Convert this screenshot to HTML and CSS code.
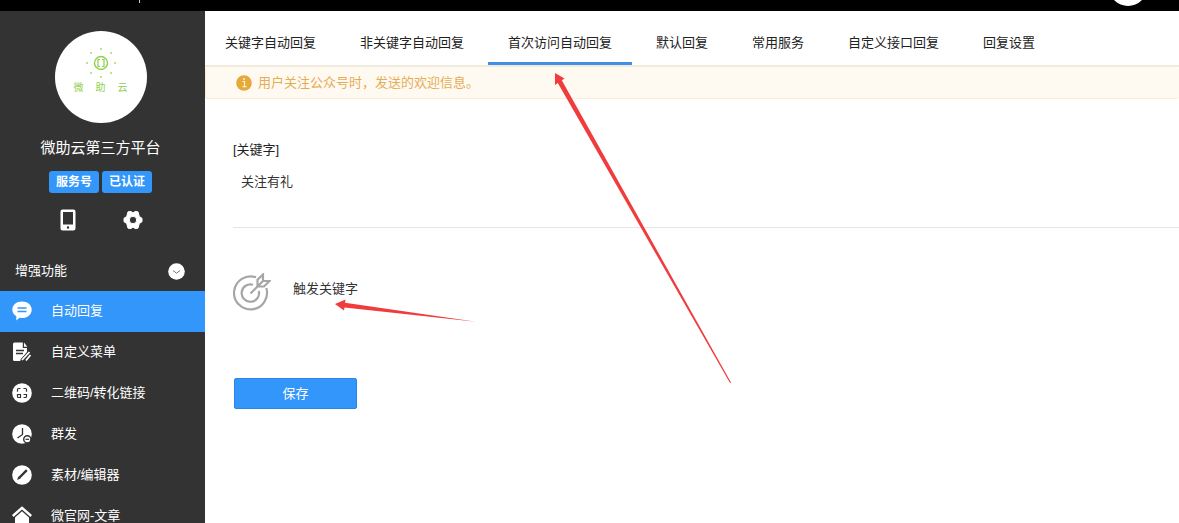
FILE: index.html
```html
<!DOCTYPE html>
<html lang="zh-CN">
<head>
  <meta charset="UTF-8">
  <title>自动回复</title>
  <link rel="stylesheet" href="styles.css">
</head>
<body>
  <header class="topbar">
    <span class="divider"></span>
    <svg class="user" width="28" height="11" viewBox="0 0 28 11"><circle cx="14" cy="-13" r="19" fill="#fff"/></svg>
  </header>

  <div class="layout">
    <aside class="sidebar">
      <div class="account">
        <div class="avatar">
          <svg width="32" height="32" viewBox="0 0 32 32" fill="none" stroke="#8fd14f">
            <circle cx="16" cy="16" r="6.500" stroke-width="1.400"/>
            <path d="M15 12.500h-2v7h2M17 12.500h2v7h-2" stroke-width="1.200"/>
            <g fill="#a5dc70" stroke="none">
              <circle cx="16" cy="2" r="1"/><circle cx="26" cy="6" r="1"/><circle cx="30" cy="16" r="1"/><circle cx="26" cy="26" r="1"/>
              <circle cx="16" cy="30" r="1"/><circle cx="6" cy="26" r="1"/><circle cx="2" cy="16" r="1"/><circle cx="6" cy="6" r="1"/>
            </g>
          </svg>
          <div class="brand"><span>微</span><span>助</span><span>云</span></div>
        </div>
        <div class="name">微助云第三方平台</div>
        <div class="badges"><span class="badge">服务号</span><span class="badge">已认证</span></div>
        <div class="tools">
          <a href="#" aria-label="手机预览">
            <svg width="20" height="22" viewBox="0 0 20 22"><path fill="#fff" fill-rule="evenodd" d="M4.500 .5h11a2 2 0 0 1 2 2v17a2 2 0 0 1-2 2h-11a2 2 0 0 1-2-2v-17a2 2 0 0 1 2-2zM5 3v12.500h10V3zM10 17.300a1.200 1.200 0 1 0 0 2.400 1.200 1.200 0 0 0 0-2.400z"/></svg>
          </a>
          <a href="#" aria-label="设置">
            <svg width="20" height="22" viewBox="0 0 20 22">
              <path fill="#fff" fill-rule="evenodd" stroke="#fff" stroke-linejoin="round" d="M5 2.800L8 2.500 10 4 12 2.500 15 2.800 16.300 7.500 19 9.300V12.700L16.300 14.500 15 19.200 12 19.500 10 18 8 19.500 5 19.200 3.700 14.500 1 12.700V9.300L3.700 7.500zM10 7.300a3.700 3.700 0 1 0 0 7.400 3.700 3.700 0 0 0 0-7.400z"/>
            </svg>
          </a>
        </div>
      </div>

      <button class="group" type="button">
        增强功能
        <svg width="17" height="17" viewBox="0 0 17 17"><circle cx="8.500" cy="8.500" r="8.300" fill="#fff"/><path d="M5 7.500l3.500 2.700L12 7.500" fill="none" stroke="#777"/></svg>
      </button>

      <nav class="menu">
        <a class="item active" href="#">
          <svg width="20" height="20" viewBox="0 0 20 20"><path fill="#fff" d="M10 .5c5.500 0 9.700 3.500 9.700 8.200S15.500 17 10 17c-1 0-1.700-.1-2.500-.3L4.200 19.500l.2-4.200C2 13.800.300 11.500.300 8.700.300 4 4.500.5 10 .5z"/><path d="M5.500 7h9M5.500 10.500h9" stroke="#3296fa" stroke-width="1.500"/></svg>
          自动回复
        </a>
        <a class="item" href="#">
          <svg width="20" height="20" viewBox="0 0 20 20"><path fill="#fff" d="M2.500.5h8.300V6H15v4l-7 9H2.500a1.500 1.500 0 0 1-1.500-1.500V2A1.500 1.500 0 0 1 2.500.5zM12 .5L15.300 4.700H12z"/><path d="M4 8.500h8M4 11.500h7" stroke="#333" stroke-width="1.400"/><path d="M18 10.500L10 19" stroke="#333" stroke-width="4.500"/><path d="M17.500 10L10 18M18.500 13L14 18.500" stroke="#fff" stroke-width="1.800"/></svg>
          自定义菜单
        </a>
        <a class="item" href="#">
          <svg width="20" height="20" viewBox="0 0 20 20"><circle cx="10" cy="10" r="9.800" fill="#fff"/><path d="M8.500 5.500H6.500a1 1 0 0 0-1 1v2.300M11.500 5.500h2a1 1 0 0 1 1 1v2.300M5.500 11.500h3v3h-2a1 1 0 0 1-1-1zM11.500 11.500h3v2a1 1 0 0 1-1 1h-2" fill="none" stroke="#333" stroke-width="1.200"/></svg>
          二维码/转化链接
        </a>
        <a class="item" href="#">
          <svg width="20" height="20" viewBox="0 0 20 20"><circle cx="10" cy="10" r="9.800" fill="#fff"/><path d="M10.500 4v6.500L5.500 14" fill="none" stroke="#333" stroke-width="1.300"/><circle cx="15.300" cy="15.300" r="3.600" fill="#fff" stroke="#333" stroke-width="1.400"/><path d="M13.500 15.300h3.600" stroke="#333" stroke-width="1.200"/></svg>
          群发
        </a>
        <a class="item" href="#">
          <svg width="20" height="20" viewBox="0 0 20 20"><circle cx="10" cy="10" r="9.800" fill="#fff"/><path d="M14.800 5.200L7 13" stroke="#333" stroke-width="2.400"/><path d="M6.500 11.500l2 2L5 15z" fill="#333"/></svg>
          素材/编辑器
        </a>
        <a class="item" href="#">
          <svg width="20" height="20" viewBox="0 0 20 20"><path d="M.8 10L10 1.800 19.200 10" fill="none" stroke="#fff" stroke-width="2.400"/><path d="M3 11.500L10 5.300l7 6.200V19H3z" fill="#fff"/></svg>
          微官网-文章
        </a>
      </nav>
    </aside>

    <main class="main">
      <nav class="tabs">
        <a class="tab" href="#">关键字自动回复</a>
        <a class="tab" href="#">非关键字自动回复</a>
        <a class="tab current" href="#">首次访问自动回复</a>
        <a class="tab" href="#">默认回复</a>
        <a class="tab" href="#">常用服务</a>
        <a class="tab" href="#">自定义接口回复</a>
        <a class="tab" href="#">回复设置</a>
      </nav>
      <div class="notice">
        <svg width="16" height="16" viewBox="0 0 16 16"><circle cx="8" cy="8" r="7.800" fill="#e6a93c"/><path d="M6.500 6.500H8.500V11.500M6.500 11.700h4" fill="none" stroke="#fff3d6" stroke-width="1.200"/><circle cx="8" cy="4" r="1" fill="#fff3d6"/></svg>
        用户关注公众号时，发送的欢迎信息。
      </div>

      <form class="form">
        <div class="field">
          <label for="keyword">[关键字]</label>
          <input id="keyword" type="text" value="关注有礼">
        </div>
        <div class="trigger">
          <svg width="38" height="38" viewBox="0 0 38 38" fill="none" stroke="#a6a6a6" stroke-width="2.200">
            <path d="M23 4.300A16.500 16.500 0 1 0 33.300 15"/>
            <path d="M20 11.800A8.700 8.700 0 1 0 25.800 18"/>
            <path d="M17.500 20.500L29.500 8.500M24.500 13.500V6.800L30 1.500V8H36.500L31 13.500z"/>
          </svg>
          <span>触发关键字</span>
        </div>
        <button class="save" type="button">保存</button>
      </form>
    </main>
  </div>

  <!-- 指示箭头 -->
  <svg class="arrows" width="740" height="400" viewBox="0 0 740 400" fill="#f03c3c">
    <path d="M555 73L564.500 78.500 561.800 80.300 731 382.500 730 383 557.800 83 555 85z"/>
    <path d="M335 304L345.500 299.500 345 302.800 476 321.800 344.500 307.500 344 310.500z"/>
  </svg>
</body>
</html>
```
FILE: styles.css
```css
* {
  box-sizing: border-box;
}
body {
  margin: 0;
  height: 100vh;
  display: flex;
  flex-direction: column;
  overflow: hidden;
  font-family: "Liberation Sans", "Noto Sans CJK SC", sans-serif;
  font-size: 13px;
  line-height: 20px;
  color: #222;
  background: #fff;
}
a {
  color: inherit;
  text-decoration: none;
}
svg {
  display: block;
  flex: none;
}
button, input {
  font: inherit;
  border: 0;
}

.topbar {
  display: flex;
  justify-content: space-between;
  flex: none;
  height: 11px;
  padding: 0 37px 0 139px;
  background: #000;
}
.divider {
  width: 1px;
  height: 3px;
  background: #ccc;
}
.layout {
  display: flex;
  flex: 1;
  min-height: 0;
}

/* 左侧栏 */
.sidebar {
  flex: none;
  width: 205px;
  overflow: hidden;
  color: #fff;
  background: #333;
}
.account {
  display: flex;
  flex-direction: column;
  align-items: center;
  padding: 20px 4px 0 0;
}
.avatar {
  display: flex;
  flex-direction: column;
  align-items: center;
  width: 92px;
  height: 92px;
  padding-top: 16px;
  border-radius: 50%;
  background: #fff;
}
.brand {
  display: flex;
  gap: 12px;
  font-size: 10px;
  line-height: 18px;
  color: #8fd14f;
}
.name {
  margin-top: 15px;
  font-size: 15px;
}
.badges {
  display: flex;
  gap: 3px;
  margin-top: 13px;
}
.badge {
  width: 50px;
  border-radius: 3px;
  font-size: 12px;
  font-weight: bold;
  line-height: 22px;
  text-align: center;
  background: #3296fa;
}
.tools {
  display: flex;
  gap: 45px;
  margin-top: 16px;
}
.group {
  display: flex;
  align-items: center;
  justify-content: space-between;
  width: 100%;
  height: 40px;
  margin-top: 20px;
  padding: 0 20px 0 15px;
  color: #fff;
  background: none;
}
.item {
  display: flex;
  align-items: center;
  gap: 19px;
  height: 41px;
  padding: 0 0 2px 12px;
}
.active {
  background: #3296fa;
}

/* 右侧内容 */
.main {
  flex: 1;
  min-width: 0;
}
.tabs {
  display: flex;
  gap: 4px;
  height: 56px;
  border-bottom: 2px solid #f0ebdd;
}
.tab {
  padding: 22px 20px 9px;
}
.current {
  border-bottom: 3px solid #4090e6;
}
.notice {
  display: flex;
  align-items: center;
  gap: 6px;
  height: 32px;
  padding-left: 30px;
  border: 1px solid #fbecd0;
  border-top: 0;
  border-right: 0;
  border-radius: 3px;
  color: #e6ac55;
  background: #fffaf1;
}
.form {
  padding: 41px 0 0 28px;
}
.field {
  display: flex;
  flex-direction: column;
  gap: 5px;
  padding-bottom: 32px;
  border-bottom: 1px solid #e5e5e5;
}
.field input {
  height: 30px;
  padding: 0 8px;
  color: #333;
  background: none;
}
.trigger {
  display: flex;
  gap: 22px;
  margin-top: 45px;
  color: #333;
}
.trigger span {
  padding-top: 6px;
}
.save {
  width: 123px;
  height: 31px;
  margin: 67px 0 0 1px;
  border: 1px solid #2887e6;
  border-radius: 2px;
  color: #fff;
  background: #3296fa;
}

.arrows {
  position: absolute;
  top: 0;
  left: 0;
  pointer-events: none;
}
```
